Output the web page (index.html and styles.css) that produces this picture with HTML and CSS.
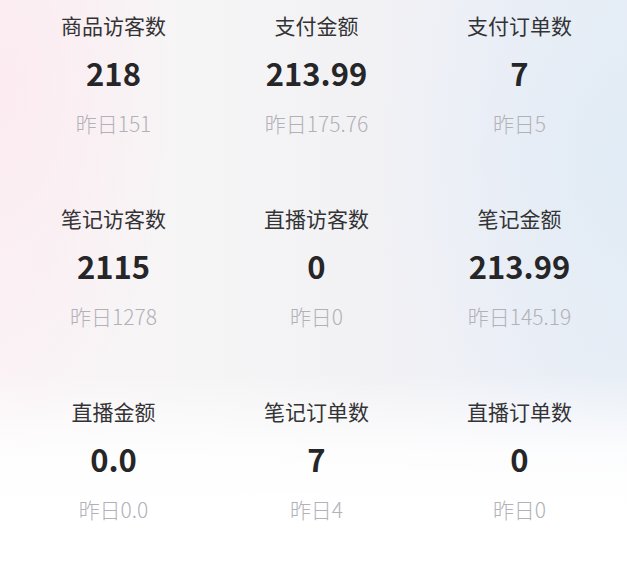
FILE: index.html
```html
<!DOCTYPE html>
<html lang="zh-CN">
<head>
<meta charset="utf-8">
<title>数据概览</title>
<link rel="stylesheet" href="styles.css">
</head>
<body>
<div class="page">
  <div class="grid">
    <div class="cell"><div class="label">商品访客数</div><div class="value">218</div><div class="prev">昨日151</div></div>
    <div class="cell"><div class="label">支付金额</div><div class="value">213.99</div><div class="prev">昨日175.76</div></div>
    <div class="cell"><div class="label">支付订单数</div><div class="value">7</div><div class="prev">昨日5</div></div>
    <div class="cell"><div class="label">笔记访客数</div><div class="value">2115</div><div class="prev">昨日1278</div></div>
    <div class="cell"><div class="label">直播访客数</div><div class="value">0</div><div class="prev">昨日0</div></div>
    <div class="cell"><div class="label">笔记金额</div><div class="value">213.99</div><div class="prev">昨日145.19</div></div>
    <div class="cell"><div class="label">直播金额</div><div class="value">0.0</div><div class="prev">昨日0.0</div></div>
    <div class="cell"><div class="label">笔记订单数</div><div class="value">7</div><div class="prev">昨日4</div></div>
    <div class="cell"><div class="label">直播订单数</div><div class="value">0</div><div class="prev">昨日0</div></div>
  </div>
</div>
</body>
</html>
```
FILE: styles.css
```css
html, body {
  margin: 0;
  padding: 0;
}
body {
  width: 627px;
  height: 565px;
  overflow: hidden;
  font-family: "Noto Sans CJK SC", "Noto Sans", sans-serif;
  background: #ffffff;
}
.page {
  height: 565px;
  background:
    linear-gradient(180deg, rgba(255,255,255,0) 0%, rgba(255,255,255,0) 66%, rgba(255,255,255,0.85) 80%, #ffffff 90%),
    radial-gradient(ellipse 180px 360px at 0% 15%, rgba(252,234,240,0.85) 0%, rgba(252,236,241,0) 100%),
    radial-gradient(ellipse 240px 360px at 100% 28%, rgba(224,235,245,0.9) 0%, rgba(226,236,246,0) 100%),
    linear-gradient(90deg, #faf4f6 0%, #f6f5f6 30%, #f2f2f4 55%, #eff0f7 80%, #ebeff6 100%);
}
.grid {
  display: grid;
  grid-template-columns: repeat(3, 1fr);
  grid-auto-rows: 193px;
  padding: 0 6px 0 12px;
}
.cell {
  display: flex;
  flex-direction: column;
  align-items: center;
  padding-top: 10px;
}
.label {
  font-size: 21px;
  line-height: 30px;
  color: #333335;
}
.value {
  margin-top: 15px;
  font-size: 31px;
  line-height: 36px;
  font-weight: 700;
  color: #262628;
}
.prev {
  margin-top: 17px;
  font-size: 21px;
  line-height: 30px;
  font-weight: 300;
  color: #b2b1b8;
}
```
